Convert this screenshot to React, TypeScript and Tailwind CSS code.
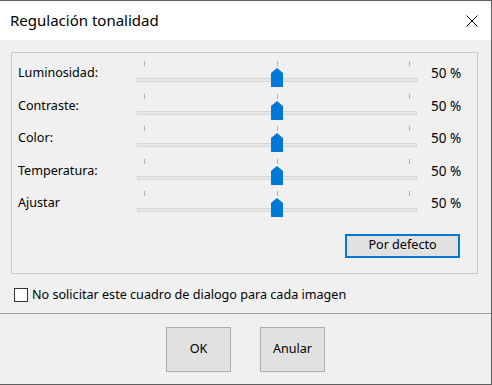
import React from "react";

function Slider() {
  return (
    <div className="relative w-[280px] h-full">
      <div className="absolute left-[7px] top-[5px] w-px h-[5px] bg-[#b0b0b0]" />
      <div className="absolute left-[140px] top-[5px] w-px h-[5px] bg-[#b0b0b0]" />
      <div className="absolute left-[272px] top-[5px] w-px h-[5px] bg-[#b0b0b0]" />
      <div className="absolute left-0 right-0 top-[22px] h-[4px] bg-[#e7e7e7] border border-[#d6d6d6]" />
      <svg className="absolute left-[134px] top-[12px]" width="12" height="19" viewBox="0 0 12 19">
        <polygon points="6,0 12,5 12,19 0,19 0,5" fill="#0078d7" />
      </svg>
    </div>
  );
}

export default function App() {
  const rows = ["Luminosidad:", "Contraste:", "Color:", "Temperatura:", "Ajustar"];
  return (
    <div className="w-[492px] h-[385px] flex flex-col bg-[#f0f0f0] border-t border-r border-b border-[#5f5f5f] overflow-hidden font-['Noto_Sans','Liberation_Sans',sans-serif] text-black">
      <div className="h-[39px] shrink-0 bg-white flex items-center justify-between pl-[10px] pr-[13px]">
        <span className="text-[15px] leading-none">Regulación tonalidad</span>
        <svg width="12" height="12" viewBox="0 0 12 12">
          <path d="M0.5 0.5 L11.5 11.5 M11.5 0.5 L0.5 11.5" stroke="#000" strokeWidth="1" />
        </svg>
      </div>
      <div className="mt-[12px] ml-[11px] w-[467px] h-[222px] border border-[#c8c8c8] flex flex-col pt-[3px]">
        {rows.map((r) => (
          <div key={r} className="h-[32.5px] flex pl-[6px]">
            <div className="w-[119px] pt-[9px] text-[12.6px] leading-[16px]">{r}</div>
            <Slider />
            <div className="ml-[14px] pt-[9px] text-[13.5px] leading-[16px]">50 %</div>
          </div>
        ))}
        <div className="flex justify-end pr-[17px] mt-[15px]">
          <div className="w-[115px] h-[24px] border-2 border-[#0078d7] bg-[#e1e1e1] flex items-center justify-center text-[12.6px]">
            Por defecto
          </div>
        </div>
      </div>
      <div className="mt-[13px] h-[16px] flex items-center pl-[14px] gap-[4px]">
        <div className="w-[14px] h-[14px] bg-white border border-[#333]" />
        <span className="text-[12.6px] leading-[16px]">No solicitar este cuadro de dialogo para cada imagen</span>
      </div>
      <div className="mt-[10px] h-px bg-[#a0a0a0]" />
      <div className="mt-[13px] flex justify-center gap-[29px]">
        <div className="w-[65px] h-[45px] border border-[#adadad] bg-[#e1e1e1] flex items-center justify-center text-[12.6px]">OK</div>
        <div className="w-[65px] h-[45px] border border-[#adadad] bg-[#e1e1e1] flex items-center justify-center text-[12.6px]">Anular</div>
      </div>
    </div>
  );
}
